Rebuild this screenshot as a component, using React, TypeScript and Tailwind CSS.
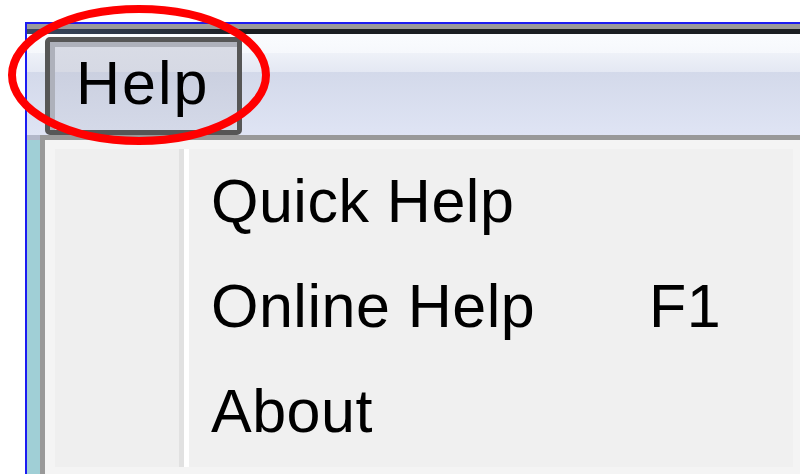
import React from 'react';

type Item = { label: string; shortcut?: string };

const items: Item[] = [
  { label: 'Quick Help' },
  { label: 'Online Help', shortcut: 'F1' },
  { label: 'About' },
];

const font = { fontFamily: '"Liberation Sans", Arial, sans-serif' };

export default function App() {
  return (
    <div className="relative w-[800px] h-[474px] bg-white overflow-hidden" style={font}>
      {/* window frame */}
      <div className="ml-[25px] mt-[22px] h-[452px] border-t-2 border-l-2 border-[#1c1cf2] flex flex-col">
        <div className="h-[5px] bg-[#9a9a9a] shrink-0"></div>
        <div className="h-[5px] bg-[linear-gradient(to_right,#3a4860,#1b1e22_220px)] shrink-0"></div>

        {/* menu bar */}
        <div className="h-[101px] shrink-0 bg-[linear-gradient(to_bottom,#fafcfe_0px,#f6f8fc_19px,#eef1f8_19px,#e4e8f3_38px,#d3d9ea_38px,#dfe4f4_101px)]">
          <div className="ml-[18px] mt-[3px] w-[197px] h-[98px] rounded-[5px] border-[5px] border-[#565656] bg-[linear-gradient(to_bottom,#d9dce6_0px,#d6d9e4_30px,#cbd0e0_30px,#d4d9e8_88px)] shadow-[inset_5px_5px_0_#aeb1bb]">
            <div className="pl-[26px] pt-[11px] text-[61px] leading-none tracking-[2px] text-black">Help</div>
          </div>
        </div>

        <div className="flex flex-1 min-h-0">
          {/* strip of the window behind the menu */}
          <div className="w-[13px] shrink-0 flex flex-col">
            <div className="h-[5px] bg-[#b3b8ca]"></div>
            <div className="flex-1 bg-[#a0cfd6]"></div>
          </div>

          {/* dropdown */}
          <div className="flex-1 border-t-[5px] border-l-[5px] border-[#999999] bg-[#f4f4f4] pl-[10px] pt-[9px] pr-[7px] pb-[7px] flex">
            <div className="flex-1 flex bg-[#f0f0f0]">
              <div className="w-[124px] shrink-0 bg-[#efefef]"></div>
              <div className="w-[5px] shrink-0 bg-[#e1e1e1]"></div>
              <div className="w-[5px] shrink-0 bg-white"></div>
              <div className="flex-1 flex flex-col pl-[22px]">
                {items.map((it) => (
                  <div key={it.label} className="h-[105px] flex text-[61px] leading-[105px] tracking-[0.5px] text-black whitespace-nowrap">
                    <span className="w-[438px] shrink-0">{it.label}</span>
                    {it.shortcut && <span>{it.shortcut}</span>}
                  </div>
                ))}
              </div>
            </div>
          </div>
        </div>
      </div>

      {/* highlight ring around the menu title */}
      <svg className="absolute left-0 top-0 pointer-events-none" width="800" height="474">
        <ellipse cx="139" cy="75" rx="127" ry="66" fill="none" stroke="#ff0000" strokeWidth="8" />
      </svg>
    </div>
  );
}
